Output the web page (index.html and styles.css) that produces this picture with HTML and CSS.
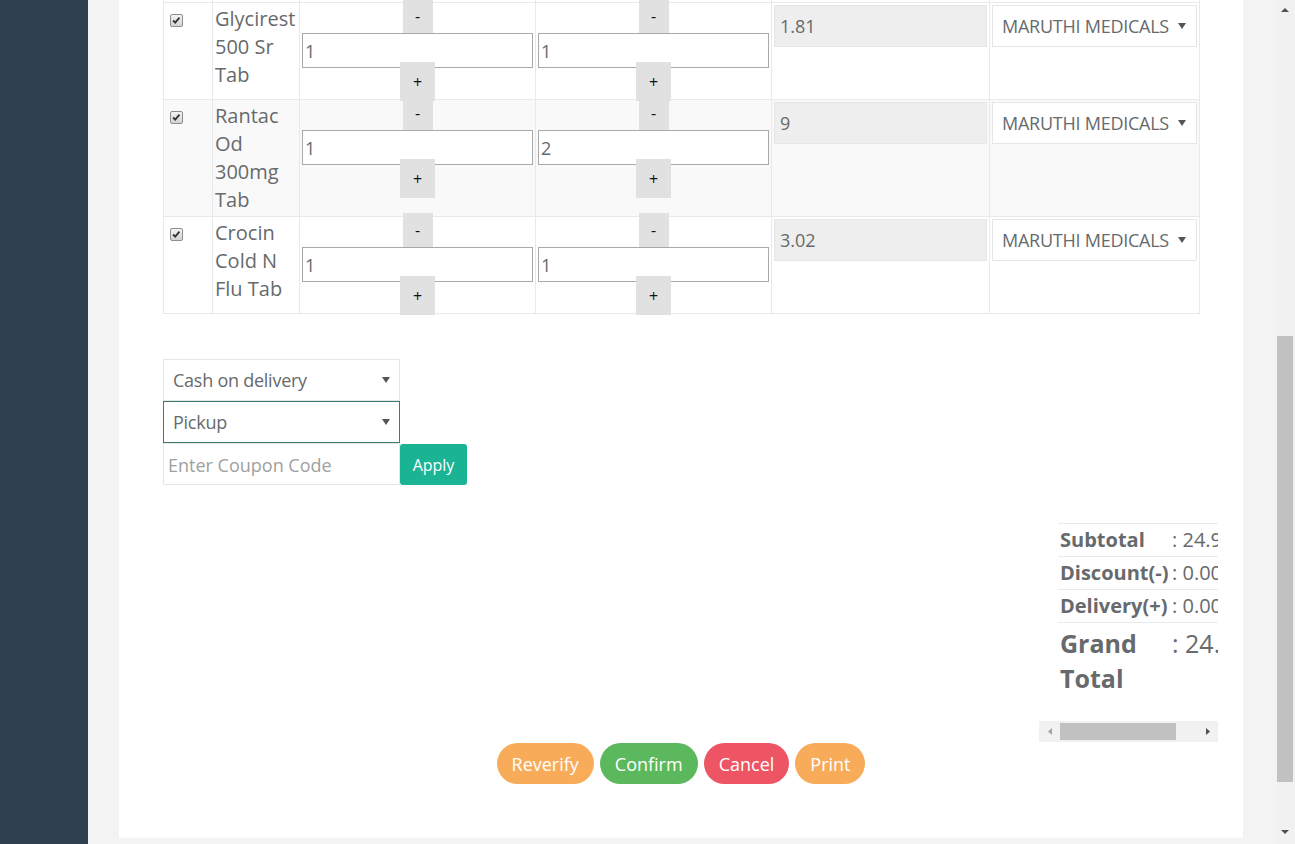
FILE: index.html
```html
<!DOCTYPE html>
<html>
<head>
<meta charset="utf-8">
<title>Order</title>
<link rel="stylesheet" href="styles.css">
</head>
<body>
<div class="app">
  <aside class="sidebar"></aside>
  <main class="main">
    <section class="panel">
      <table class="items">
        <colgroup>
          <col class="c-chk"><col class="c-name"><col class="c-qty"><col class="c-qty"><col class="c-price"><col class="c-sup">
        </colgroup>
        <thead>
          <tr><th></th><th>Name</th><th>Qty</th><th>Approved Qty</th><th>Price</th><th>Pharmacy</th></tr>
        </thead>
        <tbody>
          <tr>
            <td><span class="chk"><svg viewBox="0 0 13 13" width="11" height="11"><path d="M2.5 6.5 L5 9 L10 3.2" fill="none" stroke="#333" stroke-width="2.2"/></svg></span></td>
            <td class="name">Glycirest 500 Sr Tab</td>
            <td><div class="qty"><button class="step minus">-</button><input class="qty-input" value="1"><button class="step plus">+</button></div></td>
            <td><div class="qty"><button class="step minus">-</button><input class="qty-input" value="1"><button class="step plus">+</button></div></td>
            <td><div class="ro">1.81</div></td>
            <td><div class="select sup"><span>MARUTHI MEDICALS</span><svg class="caret" viewBox="0 0 8 6" width="8" height="6"><path d="M0 0 H8 L4 6 Z" fill="#555"/></svg></div></td>
          </tr>
          <tr>
            <td><span class="chk"><svg viewBox="0 0 13 13" width="11" height="11"><path d="M2.5 6.5 L5 9 L10 3.2" fill="none" stroke="#333" stroke-width="2.2"/></svg></span></td>
            <td class="name">Rantac Od 300mg Tab</td>
            <td><div class="qty"><button class="step minus">-</button><input class="qty-input" value="1"><button class="step plus">+</button></div></td>
            <td><div class="qty"><button class="step minus">-</button><input class="qty-input" value="2"><button class="step plus">+</button></div></td>
            <td><div class="ro">9</div></td>
            <td><div class="select sup"><span>MARUTHI MEDICALS</span><svg class="caret" viewBox="0 0 8 6" width="8" height="6"><path d="M0 0 H8 L4 6 Z" fill="#555"/></svg></div></td>
          </tr>
          <tr>
            <td><span class="chk"><svg viewBox="0 0 13 13" width="11" height="11"><path d="M2.5 6.5 L5 9 L10 3.2" fill="none" stroke="#333" stroke-width="2.2"/></svg></span></td>
            <td class="name">Crocin Cold N Flu Tab</td>
            <td><div class="qty"><button class="step minus">-</button><input class="qty-input" value="1"><button class="step plus">+</button></div></td>
            <td><div class="qty"><button class="step minus">-</button><input class="qty-input" value="1"><button class="step plus">+</button></div></td>
            <td><div class="ro">3.02</div></td>
            <td><div class="select sup"><span>MARUTHI MEDICALS</span><svg class="caret" viewBox="0 0 8 6" width="8" height="6"><path d="M0 0 H8 L4 6 Z" fill="#555"/></svg></div></td>
          </tr>
        </tbody>
      </table>

      <div class="order-form">
        <div class="select field"><span>Cash on delivery</span><svg class="caret" viewBox="0 0 8 6" width="8" height="6"><path d="M0 0 H8 L4 6 Z" fill="#555"/></svg></div>
        <div class="select field focused"><span>Pickup</span><svg class="caret" viewBox="0 0 8 6" width="8" height="6"><path d="M0 0 H8 L4 6 Z" fill="#555"/></svg></div>
        <div class="coupon">
          <input class="coupon-input" placeholder="Enter Coupon Code">
          <button class="apply">Apply</button>
        </div>
      </div>

      <div class="totals-wrap">
        <div class="totals-scroll">
          <table class="totals">
            <tr><th>Subtotal</th><td>: 24.95</td></tr>
            <tr><th>Discount(-)</th><td>: 0.00</td></tr>
            <tr><th>Delivery(+)</th><td>: 0.00</td></tr>
            <tr class="grand"><th>Grand Total</th><td>: 24.95</td></tr>
          </table>
        </div>
        <div class="hscroll">
          <div class="hs-btn"><svg viewBox="0 0 4 7" width="4" height="7"><path d="M4 0 V7 L0 3.5 Z" fill="#a3a3a3"/></svg></div>
          <div class="hs-thumb"></div>
          <div class="hs-track"></div>
          <div class="hs-btn"><svg viewBox="0 0 4 7" width="4" height="7"><path d="M0 0 V7 L4 3.5 Z" fill="#505050"/></svg></div>
        </div>
      </div>

      <div class="actions">
        <button class="btn warn">Reverify</button>
        <button class="btn ok">Confirm</button>
        <button class="btn danger">Cancel</button>
        <button class="btn warn">Print</button>
      </div>
    </section>
  </main>
  <div class="vscroll">
    <div class="vs-btn up"><svg viewBox="0 0 8 4" width="8" height="4"><path d="M0 4 H8 L4 0 Z" fill="#505050"/></svg></div>
    <div class="vs-thumb"></div>
    <div class="vs-track"></div>
    <div class="vs-btn down"><svg viewBox="0 0 8 4" width="8" height="4"><path d="M0 0 H8 L4 4 Z" fill="#505050"/></svg></div>
  </div>
</div>
</body>
</html>
```
FILE: styles.css
```css
* { box-sizing: border-box; }
html, body { margin: 0; height: 100%; overflow: hidden; }
body {
  font-family: "Open Sans", "Liberation Sans", sans-serif;
  font-size: 18px;
  color: #676a6c;
}
button, input { font-family: inherit; }

.app { display: flex; height: 844px; }
.sidebar { width: 88px; flex: none; background: #2f4050; }
.main {
  flex: 1;
  min-width: 0;
  background: #f3f3f4;
  padding: 0 34px 0 31px;
}
.panel {
  background: #fff;
  margin-top: -51px;
  padding: 20px 44px 54px;
}

/* items table */
.items {
  width: 1036px;
  border-collapse: collapse;
  table-layout: fixed;
}
.c-chk { width: 49px; }
.c-name { width: 87px; }
.c-qty { width: 236px; }
.c-price { width: 218px; }
.c-sup { width: 210px; }
.items th, .items td {
  border: 1px solid #e7eaec;
  padding: 2px;
  vertical-align: top;
  line-height: 28px;
  text-align: left;
}
.items th { font-weight: 700; white-space: nowrap; overflow: hidden; }
.items .name { font-size: 20px; }
.items tbody tr:nth-child(2) { background: #f9f9f9; }

.chk {
  display: flex;
  align-items: center;
  justify-content: center;
  width: 13px;
  height: 13px;
  margin: 9px 0 0 4px;
  border: 1px solid #8e8e8e;
  border-radius: 2px;
  background: linear-gradient(#f4f4f4, #d3d3d3);
}

.qty {
  display: flex;
  flex-direction: column;
  align-items: center;
  height: 92px;
}
.step {
  flex: none;
  border: 0;
  padding: 0;
  background: #e1e1e1;
  color: #111;
  font-size: 16px;
  line-height: 1;
  display: flex;
  align-items: center;
  justify-content: center;
}
.minus { width: 30px; height: 34px; margin-top: -6px; }
.plus { width: 35px; height: 39px; margin-top: -6px; }
.qty-input {
  flex: none;
  width: 100%;
  height: 35px;
  border: 1px solid #a9a9a9;
  padding: 0 2px;
  font-size: 18px;
  color: #676a6c;
  background: #fff;
  outline: none;
}

.ro {
  height: 42px;
  background: #eeeeee;
  border: 1px solid #e5e6e7;
  padding: 0 5px;
  display: flex;
  align-items: center;
}

.select {
  display: flex;
  align-items: center;
  justify-content: space-between;
  height: 42px;
  border: 1px solid #e5e6e7;
  background: #fff;
  padding: 0 9px 0 9px;
  white-space: nowrap;
}
.select span { letter-spacing: -0.25px; }
.select .caret { flex: none; }
.sup { padding-right: 10px; }

/* order form */
.order-form { margin-top: 45px; width: 237px; }
.field { width: 237px; }
.focused { border-color: #3f7a6e; }
.coupon { display: flex; align-items: flex-start; width: 304px; }
.coupon-input {
  width: 237px;
  height: 42px;
  border: 1px solid #e5e6e7;
  padding: 2px 4px 0;
  font-size: 18px;
  color: #676a6c;
  outline: none;
}
.coupon-input::placeholder { color: #a0a0a0; }
.apply {
  flex: none;
  width: 67px;
  height: 41px;
  margin-top: 1px;
  border: 0;
  border-radius: 3px;
  background: #1ab394;
  color: #fff;
  font-size: 16px;
  padding: 0;
}

/* totals */
.totals-wrap {
  width: 179px;
  margin: 38px -19px 0 auto;
}
.totals-scroll { overflow: hidden; }
.totals {
  margin-left: 19px;
  margin-bottom: 22px;
  width: 262px;
  table-layout: fixed;
  border-collapse: collapse;
  font-size: 20px;
}
.totals th, .totals td {
  border-top: 1px solid #e7eaec;
  padding: 3px 2px;
  line-height: 26px;
  text-align: left;
  vertical-align: top;
  white-space: nowrap;
}
.totals th { width: 112px; font-weight: 700; }
.totals .grand th, .totals .grand td { font-size: 25px; line-height: 35px; }
.totals .grand th { white-space: normal; }

.hscroll {
  display: flex;
  align-items: center;
  height: 21px;
  background: #f1f1f1;
}
.hs-btn {
  width: 21px;
  height: 21px;
  flex: none;
  display: flex;
  align-items: center;
  justify-content: center;
}
.hs-thumb { width: 116px; height: 17px; background: #c1c1c1; flex: none; }
.hs-track { flex: 1; }

/* actions */
.actions {
  display: flex;
  justify-content: center;
  gap: 6px;
  margin-top: 1px;
}
.btn {
  height: 41px;
  border: 0;
  border-radius: 21px;
  padding: 0 15px;
  font-size: 18px;
  color: #fff;
}
.warn { background: #f8ac59; }
.ok { background: #5cb85c; }
.danger { background: #ed5565; }

/* page scrollbar */
.vscroll {
  width: 18px;
  flex: none;
  background: #f1f1f1;
  display: flex;
  flex-direction: column;
}
.vs-btn {
  width: 16px;
  flex: none;
  display: flex;
  align-items: center;
  justify-content: center;
}
.vs-btn.up { height: 20px; }
.vs-btn.down { height: 24px; }
.vs-thumb { width: 16px; height: 446px; margin-top: 316px; background: #c1c1c1; flex: none; }
.vs-track { flex: 1; }
```
